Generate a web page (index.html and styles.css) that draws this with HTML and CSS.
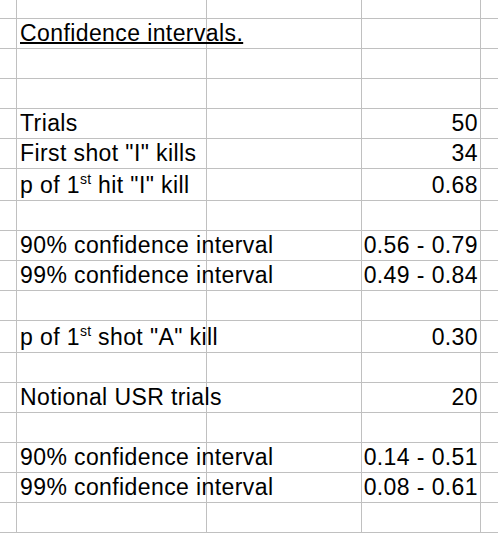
FILE: index.html
```html
<!DOCTYPE html>
<html>
<head>
<meta charset="utf-8">
<link rel="stylesheet" href="styles.css">
</head>
<body>
<div class="sheet">
  <div class="row first"><div class="c"></div><div class="c"></div><div class="c"></div><div class="c"></div><div class="c"></div></div>
  <div class="row"><div class="c"></div><div class="c txt"><span class="v u">Confidence intervals.</span></div><div class="c"></div><div class="c"></div><div class="c"></div></div>
  <div class="row"><div class="c"></div><div class="c"></div><div class="c"></div><div class="c"></div><div class="c"></div></div>
  <div class="row"><div class="c"></div><div class="c"></div><div class="c"></div><div class="c"></div><div class="c"></div></div>
  <div class="row"><div class="c"></div><div class="c txt"><span class="v">Trials</span></div><div class="c"></div><div class="c num"><span class="v">50</span></div><div class="c"></div></div>
  <div class="row"><div class="c"></div><div class="c txt"><span class="v">First shot "I" kills</span></div><div class="c"></div><div class="c num"><span class="v">34</span></div><div class="c"></div></div>
  <div class="row tall"><div class="c"></div><div class="c txt"><span class="v">p of 1<sup class="sup">st</sup> hit "I" kill</span></div><div class="c"></div><div class="c num"><span class="v">0.68</span></div><div class="c"></div></div>
  <div class="row"><div class="c"></div><div class="c"></div><div class="c"></div><div class="c"></div><div class="c"></div></div>
  <div class="row"><div class="c"></div><div class="c txt"><span class="v">90% confidence interval</span></div><div class="c"></div><div class="c num"><span class="v">0.56 - 0.79</span></div><div class="c"></div></div>
  <div class="row"><div class="c"></div><div class="c txt"><span class="v">99% confidence interval</span></div><div class="c"></div><div class="c num"><span class="v">0.49 - 0.84</span></div><div class="c"></div></div>
  <div class="row"><div class="c"></div><div class="c"></div><div class="c"></div><div class="c"></div><div class="c"></div></div>
  <div class="row tall"><div class="c"></div><div class="c txt"><span class="v">p of 1<sup class="sup">st</sup> shot "A" kill</span></div><div class="c"></div><div class="c num"><span class="v">0.30</span></div><div class="c"></div></div>
  <div class="row"><div class="c"></div><div class="c"></div><div class="c"></div><div class="c"></div><div class="c"></div></div>
  <div class="row"><div class="c"></div><div class="c txt"><span class="v">Notional USR trials</span></div><div class="c"></div><div class="c num"><span class="v">20</span></div><div class="c"></div></div>
  <div class="row"><div class="c"></div><div class="c"></div><div class="c"></div><div class="c"></div><div class="c"></div></div>
  <div class="row"><div class="c"></div><div class="c txt"><span class="v">90% confidence interval</span></div><div class="c"></div><div class="c num"><span class="v">0.14 - 0.51</span></div><div class="c"></div></div>
  <div class="row"><div class="c"></div><div class="c txt"><span class="v">99% confidence interval</span></div><div class="c"></div><div class="c num"><span class="v">0.08 - 0.61</span></div><div class="c"></div></div>
  <div class="row"><div class="c"></div><div class="c"></div><div class="c"></div><div class="c"></div><div class="c"></div></div>
</div>
</body>
</html>
```

FILE: styles.css
```css
html, body {
  margin: 0;
  padding: 0;
  background: #ffffff;
}

body {
  width: 498px;
  height: 534px;
  overflow: hidden;
  font-family: "Liberation Sans", Arial, sans-serif;
  font-size: 23px;
  letter-spacing: 0.4px;
  color: #000000;
}

.sheet {
  display: flex;
  flex-direction: column;
}

.row {
  display: grid;
  grid-template-columns: 17px 190px 155px 119px 1fr;
  height: 30px;
}

.row.first {
  height: 19px;
}

.row.tall {
  height: 32px;
}

.c {
  box-sizing: border-box;
  border-right: 1px solid #c0c0c0;
  border-bottom: 1px solid #c0c0c0;
  display: flex;
  align-items: flex-end;
  padding: 0 2px 3px 3px;
  white-space: nowrap;
  min-width: 0;
}

.c:last-child {
  border-right: none;
}

.txt {
  overflow: visible;
  position: relative;
  z-index: 1;
}

.num {
  justify-content: flex-end;
}

.v {
  display: block;
  line-height: 23px;
}

.u {
  text-decoration: underline;
  text-decoration-thickness: 2px;
  text-underline-offset: 1px;
}

.sup {
  font-size: 14px;
  line-height: 0;
  letter-spacing: 0.2px;
  vertical-align: 9px;
}
```
